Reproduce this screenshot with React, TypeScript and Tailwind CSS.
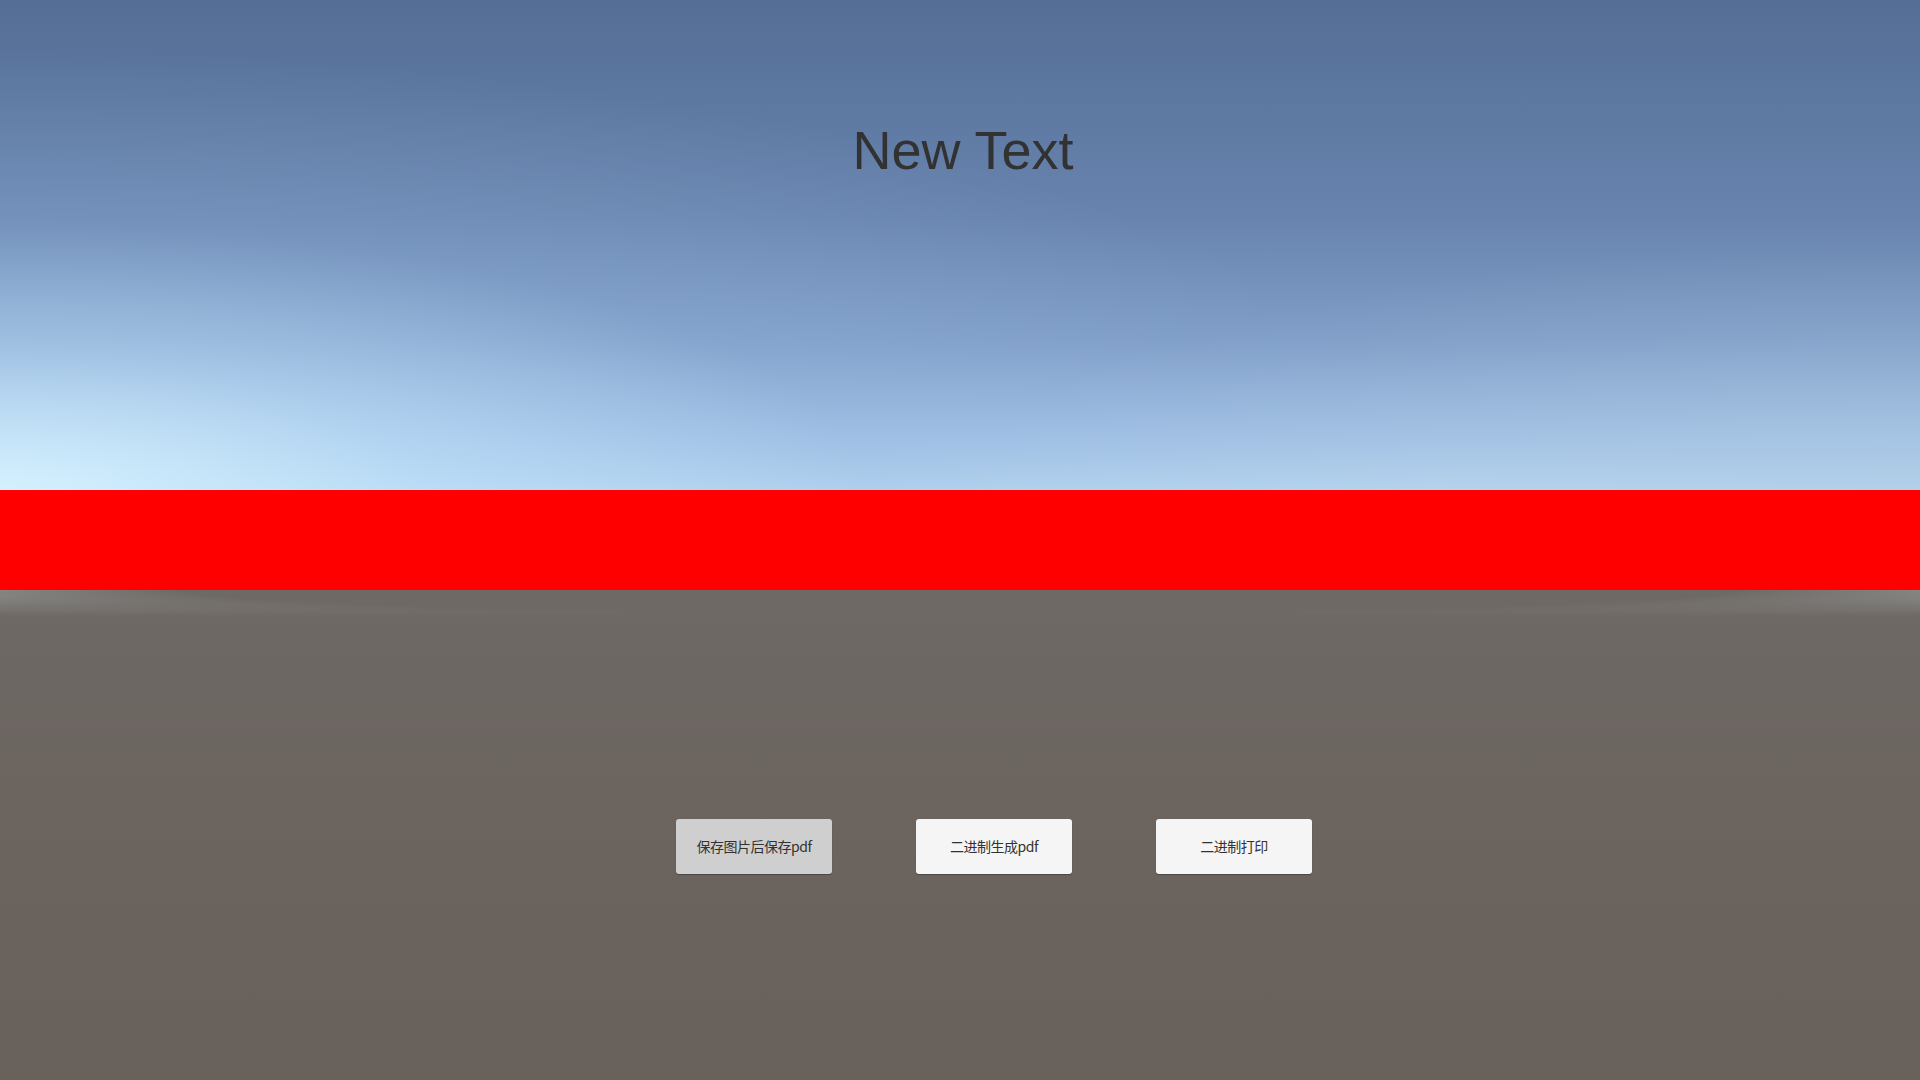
const BUTTONS = [
  { id: "img-pdf", label: "保存图片后保存pdf", bg: "bg-[#cfcfcf]" }, // highlighted
  { id: "bin-pdf", label: "二进制生成pdf", bg: "bg-[#f5f5f5]" },
  { id: "bin-print", label: "二进制打印", bg: "bg-[#f5f5f5]" },
];

export default function App() {
  return (
    <div className="w-[1920px] h-[1080px] flex flex-col overflow-hidden font-['Liberation_Sans',Arial,sans-serif]">
      {/* Sky */}
      <div className="h-[490px] flex flex-col items-center pt-[123px] bg-[radial-gradient(ellipse_75%_90%_at_0%_100%,rgba(214,243,255,0.9)_0%,rgba(190,225,250,0.55)_30%,rgba(150,185,225,0.25)_60%,rgba(150,185,225,0)_100%),radial-gradient(ellipse_50%_50%_at_100%_100%,rgba(172,200,222,0.45),rgba(172,200,222,0)),linear-gradient(to_bottom,#556e96_0%,#5c77a0_20%,#6985af_45%,#809ec8_70%,#a3c2e6_90%,#b7d6f0_100%)]">
        <h1 className="text-[54px] leading-none text-[#323232] pl-[6px]">New Text</h1>
      </div>

      {/* Red band */}
      <div className="h-[100px] bg-[#ff0000]" />

      {/* Ground */}
      <div className="flex-1 flex flex-col pt-[229px] bg-[radial-gradient(ellipse_62%_34px_at_50%_0%,#6e6965_65%,rgba(110,105,101,0)_100%),linear-gradient(to_bottom,#a3a8a7_0px,#9a9d9b_6px,#7c7a77_16px,#6e6965_26px,#6b645f_200px,#69615b_490px)]">
        <div className="flex gap-[84px] pl-[676px]">
          {BUTTONS.map((b) => (
            <button
              key={b.id}
              className={`${b.bg} w-[156px] h-[55px] rounded-[3px] shadow-[0_1px_1px_rgba(0,0,0,0.3)] flex items-center justify-center text-[14px] text-[#323232] font-['Noto_Sans_CJK_SC','Noto_Sans',sans-serif] tracking-[-0.5px]`}
            >
              {b.label}
            </button>
          ))}
        </div>
      </div>
    </div>
  );
}
